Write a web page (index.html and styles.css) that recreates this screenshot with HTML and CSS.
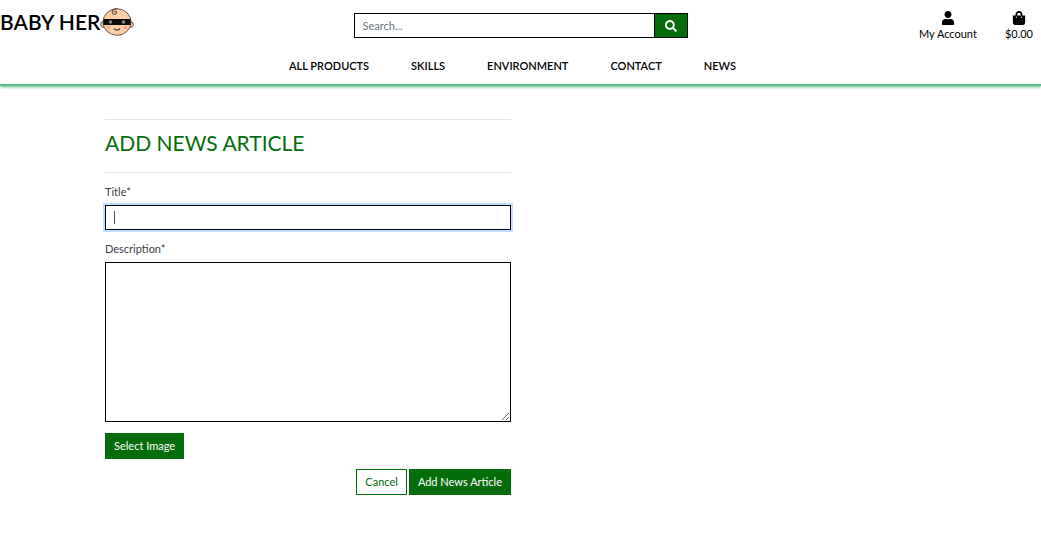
FILE: index.html
```html
<!DOCTYPE html>
<html lang="en">
<head>
<meta charset="utf-8">
<meta name="viewport" content="width=device-width, initial-scale=1">
<title>Baby Hero - Add News Article</title>
<link rel="stylesheet" href="styles.css">
</head>
<body>
<header class="site-header">
  <div class="topbar">
    <a class="logo" href="#" aria-label="Baby Hero">
      <span class="logo-text">BABY HER</span>
      <svg class="logo-face" viewBox="0 0 34 28" aria-hidden="true">
        <g stroke="#6b5a50" stroke-width="1">
          <circle cx="3.600" cy="16.500" r="3" fill="#f3bd92"/>
          <circle cx="30.400" cy="16.500" r="3" fill="#f3bd92"/>
          <ellipse cx="17" cy="14" rx="14" ry="13.300" fill="#fbcfa5"/>
        </g>
        <path d="M17.500 1c-3.500-.6-6 1.500-5 4 1 2 4.300 1.500 3.800-.8-.3-1.200-1.800-1.200-2-.2" fill="none" stroke="#5b4940" stroke-width="1.100"/>
        <path d="M3.500 11h27q.5 3 0 6h-27q-.5-3 0-6z" fill="#0c0c0c"/>
        <circle cx="10.500" cy="14" r="1.800" fill="#858585"/>
        <circle cx="23.500" cy="14" r="1.800" fill="#858585"/>
        <circle cx="8.500" cy="19.500" r="1.900" fill="#f9a994"/>
        <circle cx="25.500" cy="19.500" r="1.900" fill="#f9a994"/>
        <path d="M14 20.500q3 3.400 6 0" fill="none" stroke="#6b4a3a" stroke-width="1.200"/>
      </svg>
    </a>
    <form class="search" role="search">
      <input class="search-input" type="search" placeholder="Search..." aria-label="Search">
      <button class="search-button" type="button" aria-label="Search">
        <svg class="search-icon" viewBox="0 0 512 512" aria-hidden="true"><path fill="currentColor" d="M505 442.700L405.300 343c-4.500-4.500-10.600-7-17-7H372c27.600-35.300 44-79.700 44-128C416 93.100 322.900 0 208 0S0 93.100 0 208s93.100 208 208 208c48.300 0 92.700-16.400 128-44v16.300c0 6.400 2.500 12.500 7 17l99.700 99.700c9.400 9.400 24.600 9.400 33.900 0l28.300-28.300c9.400-9.400 9.400-24.600.1-34zM208 336c-70.700 0-128-57.200-128-128 0-70.700 57.200-128 128-128 70.700 0 128 57.200 128 128 0 70.700-57.200 128-128 128z"/></svg>
      </button>
    </form>
    <div class="account">
      <a class="account-link" href="#">
        <svg class="account-icon" viewBox="0 0 448 512" aria-hidden="true"><path fill="currentColor" d="M224 256c70.700 0 128-57.300 128-128S294.700 0 224 0 96 57.300 96 128s57.300 128 128 128zm89.600 32h-16.700c-22.200 10.200-46.900 16-72.900 16s-50.600-5.800-72.900-16h-16.700C60.200 288 0 348.200 0 422.400V464c0 26.500 21.500 48 48 48h352c26.500 0 48-21.500 48-48v-41.600c0-74.200-60.200-134.400-134.400-134.400z"/></svg>
        <span>My Account</span>
      </a>
      <a class="account-link" href="#">
        <svg class="account-icon" viewBox="0 0 448 512" aria-hidden="true"><path fill="currentColor" d="M352 160v-32C352 57.400 294.600 0 224 0S96 57.400 96 128v32H0v272c0 44.200 35.800 80 80 80h288c44.200 0 80-35.800 80-80V160h-96zm-192-32c0-35.300 28.700-64 64-64s64 28.700 64 64v32H160v-32zm160 120c-13.300 0-24-10.700-24-24s10.700-24 24-24 24 10.700 24 24-10.700 24-24 24zm-192 0c-13.300 0-24-10.700-24-24s10.700-24 24-24 24 10.700 24 24-10.700 24-24 24z"/></svg>
        <span>$0.00</span>
      </a>
    </div>
  </div>
  <nav class="main-nav" aria-label="Main">
    <a class="nav-link" href="#">ALL PRODUCTS</a>
    <a class="nav-link" href="#">SKILLS</a>
    <a class="nav-link" href="#">ENVIRONMENT</a>
    <a class="nav-link" href="#">CONTACT</a>
    <a class="nav-link" href="#">NEWS</a>
  </nav>
</header>
<main class="page">
  <form class="article-form">
    <h1 class="form-title">ADD NEWS ARTICLE</h1>
    <label class="field-label" for="title">Title*</label>
    <input class="field field-title" id="title" type="text" autofocus>
    <label class="field-label" for="description">Description*</label>
    <textarea class="field field-area" id="description"></textarea>
    <button class="button button-image" type="button">Select Image</button>
    <div class="actions">
      <button class="button button-outline" type="button">Cancel</button>
      <button class="button" type="button">Add News Article</button>
    </div>
  </form>
</main>
</body>
</html>
```
FILE: styles.css
```css
*,
*::before,
*::after {
  box-sizing: border-box;
}

body {
  margin: 0;
  background: #fff;
  color: #3b4045;
  font: 400 11px/18px Lato, sans-serif;
}

a {
  color: #000;
  text-decoration: none;
}

input,
textarea,
button {
  margin: 0;
  border-radius: 0;
  font: inherit;
}

.site-header {
  border-bottom: 2px solid #5fbd88;
  box-shadow: 0 1px 3px #5fbd88;
}

.topbar {
  display: grid;
  grid-template-columns: 1fr 334px 1fr;
  align-items: start;
  padding-top: 8px;
}

.logo {
  display: flex;
  align-items: center;
  height: 28px;
}

.logo-text {
  font-size: 21px;
  font-weight: 600;
  line-height: 28px;
  white-space: nowrap;
}

.logo-face {
  width: 34px;
  height: 28px;
}

.search {
  display: flex;
  height: 25px;
  margin-top: 5px;
  border: 1px solid #000;
}

.search-input {
  flex: 1;
  min-width: 0;
  padding: 0 8px;
  border: 0;
  outline: 0;
  background: #fff;
  appearance: none;
}

.search-input::placeholder {
  color: #6c757d;
  opacity: 1;
}

.search-button {
  display: flex;
  align-items: center;
  justify-content: center;
  width: 33px;
  padding: 0;
  border: 0;
  border-left: 1px solid #000;
  background: #056d0c;
  color: #fff;
}

.search-icon {
  width: 12px;
  height: 12px;
}

.account {
  display: flex;
  justify-content: flex-end;
  gap: 28px;
  padding: 3px 8px 0 0;
}

.account-link {
  display: flex;
  flex-direction: column;
  align-items: center;
}

.account-icon {
  width: 14px;
  height: 14px;
}

.main-nav {
  display: flex;
  justify-content: center;
  gap: 42px;
  padding: 14px 16px 9px 0;
}

.nav-link {
  font-weight: 600;
}

.page {
  display: grid;
  grid-template-columns: 1fr 1fr;
  gap: 19px;
  max-width: 831px;
  margin: 0 auto;
  padding: 33px 0;
}

.article-form {
  display: flex;
  flex-direction: column;
}

.form-title {
  margin: 0 0 10px;
  padding: 9px 0 15px;
  border-top: 1px solid #e5e5e5;
  border-bottom: 1px solid #e5e5e5;
  color: #056d0c;
  font-size: 21px;
  font-weight: 400;
  line-height: 28px;
}

.field-label {
  margin-bottom: 4px;
}

.field {
  width: 100%;
  height: 25px;
  margin-bottom: 10px;
  padding: 3px 8px;
  border: 1px solid #000;
  background: #fff;
  color: #495057;
}

.field:focus {
  outline: 0;
  box-shadow: 0 0 0 2px #bfdeff;
}

.field-title:focus {
  background: linear-gradient(#495057, #495057) 8px 5px / 1px 13px no-repeat #fff;
  caret-color: transparent;
}

.field-area {
  height: 160px;
  margin-bottom: 11px;
  resize: vertical;
}

.button {
  height: 26px;
  padding: 0 8px;
  border: 1px solid #056d0c;
  background: #056d0c;
  color: #fff;
}

.button-image {
  align-self: flex-start;
}

.button-outline {
  background: #fff;
  color: #056d0c;
}

.actions {
  display: flex;
  justify-content: flex-end;
  gap: 2px;
  margin-top: 10px;
}
```
